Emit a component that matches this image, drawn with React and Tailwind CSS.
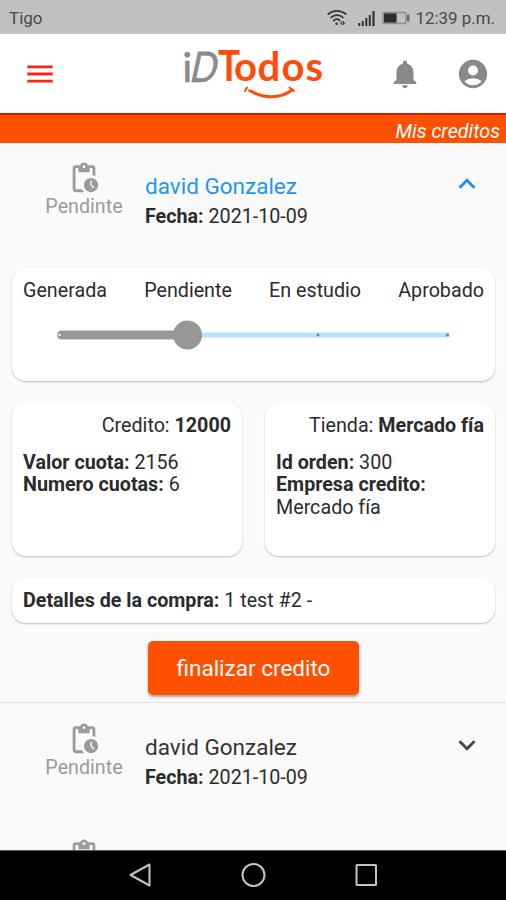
import React, { useState } from 'react';
import {
  MdAccountCircle,
  MdExpandLess,
  MdExpandMore,
  MdMenu,
  MdNotifications,
  MdPendingActions,
} from 'react-icons/md';

const STEPS = ['Generada', 'Pendiente', 'En estudio', 'Aprobado'];

const CREDITS = [
  { id: 1, name: 'david Gonzalez', date: '2021-10-09' },
  { id: 2, name: 'david Gonzalez', date: '2021-10-09' },
  { id: 3, name: 'david Gonzalez', date: '2021-10-09' },
];

const StatusBar = () => (
  <div className="flex h-[34px] shrink-0 items-center justify-between bg-[#c1c1c1] pl-[9px] pr-[11px] pt-[2px] text-[17px] text-[#484848]">
    <span>Tigo</span>
    <div className="flex items-center">
      {/* Wifi */}
      <svg className="h-[18px] w-[20px]" viewBox="0 0 20 18" fill="none" stroke="#333" strokeWidth="1.7" strokeLinecap="round">
        <path d="M1.2 5.2C6.2 0.8 13.8 0.8 18.8 5.2" />
        <path d="M4 8.5C7.4 5.3 12.6 5.3 16 8.5" />
        <path d="M6.8 11.7C8.6 10 11 10 12.6 11.3" />
        <circle cx="9.6" cy="14.7" r="1.3" fill="#333" stroke="none" />
        <path d="M13.2 14l1.500-1.500v3M16.400 12.500v3l1.500-1.500" strokeWidth="1" />
      </svg>
      {/* Signal */}
      <svg className="ml-[11px] h-[17px] w-[17px]" viewBox="0 0 17 17" fill="#333">
        <rect x="0.3" y="13" width="2" height="3" />
        <rect x="3.8" y="11" width="2" height="5" />
        <rect x="7.3" y="8" width="2" height="8" />
        <rect x="10.8" y="5" width="2" height="11" />
        <rect x="14.4" y="1" width="2.2" height="15" />
      </svg>
      {/* Battery */}
      <svg className="ml-[7px] h-[14px] w-[28px]" viewBox="0 0 28 14">
        <rect x="0.9" y="1.4" width="23" height="11.2" rx="1.5" fill="none" stroke="#8b8b8b" strokeWidth="1.5" />
        <rect x="2" y="2.4" width="12.6" height="9.2" fill="#2d2d2d" />
        <rect x="25" y="3.4" width="2.4" height="7.2" rx="1" fill="#666" />
      </svg>
      <span className="ml-[6px] text-[16.900px]">12:39 p.m.</span>
    </div>
  </div>
);

const Logo = () => (
  <svg className="h-[64px] w-[146px] overflow-visible" viewBox="0 0 146 64" fontFamily="Lato, sans-serif">
    <g fill="#8b8b8b" stroke="#8b8b8b" strokeWidth="0.700" strokeLinejoin="round">
      <text x="0.500" y="39.500" fontSize="40">i</text>
      <text transform="translate(6.500 39.500) skewX(-12) scale(0.84 1)" fontSize="42">D</text>
    </g>
    <g fill="#ff4b0c" fontSize="40" fontWeight="700">
      <text transform="translate(36 39) scale(0.88 1)" fontSize="42">T</text>
      <text x="52 75.500 99.500 123.500" y="39">odos</text>
    </g>
    <g fill="none" stroke="#ff4b0c" strokeLinecap="round">
      <path d="M63 49l2-3.500M67 48.500l2 1" strokeWidth="2" />
      <path d="M69 49C80 56.500 99 57 110 48" strokeWidth="3" />
      <path d="M107.500 45.500l4.500 3.500" strokeWidth="2" />
    </g>
  </svg>
);

const AppBar = () => (
  <header className="flex h-[79px] shrink-0 items-center bg-white pl-[23px] pr-[16px]">
    <button className="text-[#f5251c]">
      <MdMenu className="h-[34px] w-[34px]" />
    </button>
    <div className="ml-[125px]">
      <Logo />
    </div>
    <div className="ml-auto flex items-center gap-[34px] text-[#898989]">
      <MdNotifications className="h-[34px] w-[34px]" />
      <MdAccountCircle className="h-[34px] w-[34px]" />
    </div>
  </header>
);

const Card = ({ className = '', children }) => (
  <section className={`rounded-[14px] bg-white px-[11px] shadow-[0_1px_2px_rgba(0,0,0,0.25)] ${className}`}>
    {children}
  </section>
);

const Progress = () => (
  <svg className="mt-[17px] ml-[33px] h-[30px] w-[396px]" viewBox="0 0 396 30">
    <rect x="130" y="12.500" width="264" height="5" rx="1" fill="#b6e3fa" />
    <rect x="1" y="10.500" width="132" height="9" rx="4.500" fill="#979797" />
    <circle cx="3.500" cy="15" r="1.300" fill="#eee" />
    <circle cx="131.500" cy="15" r="14.500" fill="#979797" />
    <circle cx="262" cy="15" r="1.400" fill="#6d8592" />
    <circle cx="391.500" cy="15" r="1.400" fill="#6d8592" />
  </svg>
);

const CreditDetails = () => (
  <div className="flex flex-col pb-[7px] pl-[12px] pr-[11px] pt-[9px]">
    <Card className="h-[113px] pt-[12px]">
      <div className="flex justify-between">
        {STEPS.map((step) => (
          <span key={step}>{step}</span>
        ))}
      </div>
      <Progress />
    </Card>

    <div className="mt-[22px] grid grid-cols-2 gap-[23px]">
      <Card className="h-[153px] pt-[12px]">
        <p className="text-right">Credito: <b>12000</b></p>
        <div className="mt-[14px]">
          <p><b>Valor cuota:</b> 2156</p>
          <p><b>Numero cuotas:</b> 6</p>
        </div>
      </Card>
      <Card className="h-[153px] pt-[12px]">
        <p className="text-right">Tienda: <b>Mercado fía</b></p>
        <div className="mt-[14px]">
          <p><b>Id orden:</b> 300</p>
          <p><b>Empresa credito:</b></p>
          <p>Mercado fía</p>
        </div>
      </Card>
    </div>

    <Card className="mt-[22px] flex h-[45px] items-center pt-[2px]">
      <p><b>Detalles de la compra:</b> 1 test #2 -</p>
    </Card>

    <button className="mt-[18px] h-[54px] w-[211px] self-center rounded-[5px] bg-[#ff5000] text-[22.500px] text-white shadow-[0_2px_3px_rgba(0,0,0,0.35)]">
      finalizar credito
    </button>
  </div>
);

const CreditItem = ({ credit, open, onToggle }) => (
  <article className={open ? 'mb-px border-b border-[#dedede]' : ''}>
    <div className="flex h-[116px] cursor-pointer items-start pl-[23px] pr-[22px] pt-[18px]" onClick={onToggle}>
      <div className="flex w-[122px] flex-col items-center text-[#9b9b9b]">
        <MdPendingActions className="h-[34px] w-[34px]" />
        <span className="leading-[23px]">Pendinte</span>
      </div>
      <div className="pt-[11px]">
        <h2 className={`text-[22.500px] leading-[28px] ${open ? 'text-[#2196f3]' : 'text-[#333]'}`}>{credit.name}</h2>
        <p className="mt-[6px]"><b>Fecha:</b> {credit.date}</p>
      </div>
      <div className={`ml-auto pt-[6px] ${open ? 'text-[#1e90ee]' : 'text-[#444]'}`}>
        {open ? <MdExpandLess className="h-[34px] w-[34px]" /> : <MdExpandMore className="h-[34px] w-[34px]" />}
      </div>
    </div>
    {open && <CreditDetails />}
  </article>
);

const NavigationBar = () => (
  <nav className="flex h-[50px] shrink-0 items-center justify-center gap-[87px] border-t border-[#555] bg-black pb-[1px] text-[#c4c4c4]">
    <svg className="h-[26px] w-[26px]" viewBox="0 0 26 26" fill="none" stroke="currentColor" strokeWidth="2" strokeLinejoin="round">
      <path d="M22.500 2.500v21L3.500 13z" />
    </svg>
    <svg className="h-[26px] w-[26px]" viewBox="0 0 26 26" fill="none" stroke="currentColor" strokeWidth="2">
      <circle cx="13.500" cy="13" r="11" />
    </svg>
    <svg className="h-[26px] w-[26px]" viewBox="0 0 26 26" fill="none" stroke="currentColor" strokeWidth="2">
      <rect x="3.500" y="3" width="19.500" height="20" rx="0.500" />
    </svg>
  </nav>
);

const App = () => {
  const [openId, setOpenId] = useState(1);

  return (
    <div className="flex h-[900px] w-[506px] flex-col overflow-hidden bg-[#fafafa] font-[Roboto,sans-serif] text-[19.700px] leading-[22.500px] text-[#2b2b2b]">
      <StatusBar />
      <AppBar />
      <div className="h-[30px] shrink-0 border-t-2 border-[#d41a08] bg-[#ff5000] pr-[6px] pt-[6px] text-right italic text-white">
        Mis creditos
      </div>
      <main className="min-h-0 flex-1 overflow-hidden">
        {CREDITS.map((credit) => (
          <CreditItem
            key={credit.id}
            credit={credit}
            open={openId === credit.id}
            onToggle={() => setOpenId(openId === credit.id ? null : credit.id)}
          />
        ))}
      </main>
      <NavigationBar />
    </div>
  );
};

export default App;
